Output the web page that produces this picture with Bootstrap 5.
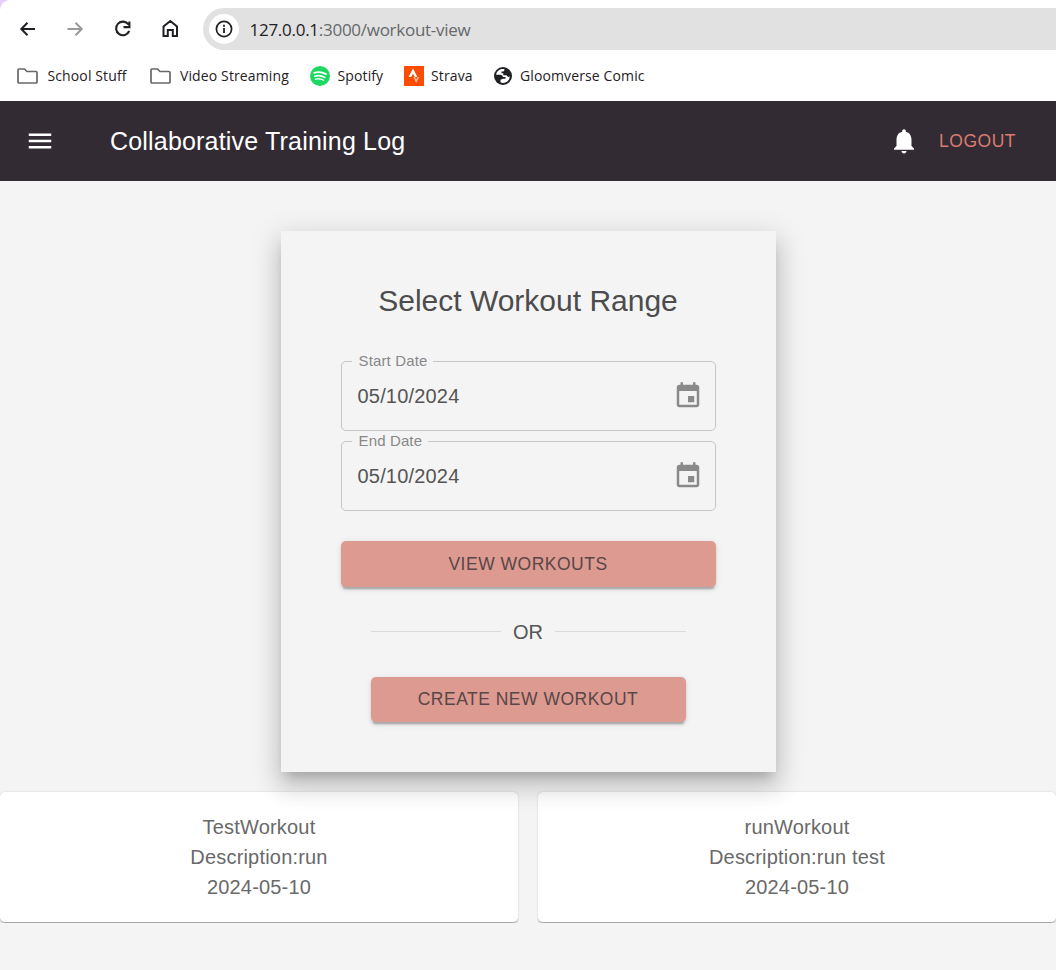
<!DOCTYPE html>
<html lang="en">
<head>
<meta charset="utf-8">
<meta name="viewport" content="width=device-width, initial-scale=1">
<title>Collaborative Training Log</title>
<link href="https://cdn.jsdelivr.net/npm/bootstrap@5.3.0/dist/css/bootstrap.min.css" rel="stylesheet">
<style>
  body { background: #f4f4f4; font-family: "Liberation Sans", Arial, sans-serif; font-size: 20px; line-height: 30px; letter-spacing: .19px; color: #696969; overflow: hidden; }
  svg { display: block; flex: none; }
  .browser { height: 101px; background: #e6cffc; font-family: "Open Sans", "Noto Sans", sans-serif; color: #1f2023; }
  .browser-inner { height: 101px; background: #fff; border-top-left-radius: 10px; }
  .tools { height: 58px; padding-left: 17px; }
  .tools .nav-icon { width: 47.5px; }
  .address { height: 42px; background: #e1e1e1; border-radius: 21px 0 0 21px; padding-left: 6px; margin-left: -4px; }
  .site-info { width: 30px; height: 30px; background: #fff; margin-right: 10.5px; }
  .url { font-size: 17px; letter-spacing: -.27px; color: #66686b; padding-top: 1px; }
  .url b { font-weight: 400; color: #1f2023; }
  .bookmarks { height: 36px; padding-left: 17px; font-size: 14px; letter-spacing: .12px; }
  .bm-label { line-height: 20px; }
  .topbar { height: 80px; background: #322b33; padding: 0 40px 0 25px; color: #fff; }
  .brand-text { font-size: 25px; letter-spacing: .19px; margin-left: 55px; }
  .caps { font-size: 17.5px; letter-spacing: .5px; line-height: 30px; }
  .logout { color: #dd7a71; margin-left: 20px; }
  .range-card { width: 495px; height: 541px; margin-top: 50px; padding: 50px 60px 0; position: relative; z-index: 1; background: #f4f4f4;
    box-shadow: 0 8.75px 10px -5px rgba(0,0,0,.17), 0 15px 21.25px 2.5px rgba(0,0,0,.12), 0 6.25px 27.5px 5px rgba(0,0,0,.1); }
  .range-title { font-size: 30px; line-height: 40px; letter-spacing: 0; color: #4c4c4c; margin-bottom: 40px; }
  .date-box { height: 70px; border: 1px solid #c6c6c6; border-radius: 5px; padding: 0 12px 0 16px; position: relative; color: #555; }
  .date-box + .date-box { margin-top: 10px; }
  .date-tag { position: absolute; left: 10px; top: -11px; padding: 0 6px 0 7px; font-size: 15px; letter-spacing: .14px; line-height: 20px; background: #f4f4f4; color: #888; }
  .action { background: #dd9a91; color: #584747; border: 0; border-radius: 5px; height: 46px; padding: 0;
    box-shadow: 0 3.75px 1.25px -2.5px rgba(0,0,0,.16), 0 2.5px 2.5px 0 rgba(0,0,0,.11), 0 1.25px 6.25px 0 rgba(0,0,0,.1); }
  .action-short { height: 45px; padding-bottom: 1px; }
  .rule { height: 1px; background: #dadada; }
  .workout { height: 131px; background: #fff; border-radius: 5px; padding-top: 20px; border-bottom: 1px solid #a6a6a6;
    box-shadow: 0 .5px 2px 0 rgba(0,0,0,.18); }
</style>
</head>
<body>
<header class="browser">
  <div class="browser-inner">
    <div class="tools d-flex align-items-center">
      <div class="nav-icon"><svg width="22" height="22" viewBox="0 0 22 22" fill="none" stroke="#1f2023" stroke-width="2"><path d="M18 11H4.500M10.500 4.800L4.300 11l6.200 6.200"/></svg></div>
      <div class="nav-icon"><svg width="22" height="22" viewBox="0 0 22 22" fill="none" stroke="#999" stroke-width="2"><path d="M2.500 11H16M10.500 4.800l6.200 6.200L10.500 17.200"/></svg></div>
      <div class="nav-icon"><svg width="22" height="22" viewBox="0 0 22 22" fill="none" stroke="#1f2023" stroke-width="2.100"><path d="M16.500 6.500A6.800 6.800 0 1 0 17.200 13M17.400 3.500v5.600H11.500"/></svg></div>
      <div class="nav-icon"><svg width="22" height="22" viewBox="0 0 22 22" fill="none" stroke="#1f2023" stroke-width="2"><path d="M3.500 18V8.500L10.300 3 17 8.500V18H12.800v-6H7.800V18Z"/></svg></div>
      <div class="address flex-grow-1 d-flex align-items-center">
        <span class="site-info rounded-circle d-flex align-items-center justify-content-center"><svg width="18" height="18" viewBox="0 0 18 18"><circle cx="9" cy="9" r="7.600" fill="none" stroke="#1f2023" stroke-width="1.700"/><path d="M9 8v5M9 4.800v2" stroke="#1f2023" stroke-width="1.800"/></svg></span>
        <span class="url text-nowrap"><b>127.0.0.1</b>:3000/workout-view</span>
      </div>
    </div>
    <nav class="bookmarks d-flex align-items-center text-nowrap">
      <svg width="21" height="16" viewBox="0 0 21 16" fill="none" stroke="#66686b" stroke-width="1.700"><path d="M1 2q0-1 1-1h5.500l2.500 2.500h9q1 0 1 1V14q0 1-1 1H2q-1 0-1-1Z"/></svg>
      <span class="bm-label" style="margin-left:9.5px;width:102.500px">School Stuff</span>
      <svg width="21" height="16" viewBox="0 0 21 16" fill="none" stroke="#66686b" stroke-width="1.700"><path d="M1 2q0-1 1-1h5.500l2.500 2.500h9q1 0 1 1V14q0 1-1 1H2q-1 0-1-1Z"/></svg>
      <span class="bm-label" style="margin-left:9px;width:130px">Video Streaming</span>
      <svg width="20" height="20" viewBox="0 0 20 20"><circle cx="10" cy="10" r="10" fill="#1ed760"/><g fill="none" stroke="#fff" stroke-linecap="round"><path d="M4.200 6.800q6.300-1.800 11.800 1.300" stroke-width="1.900"/><path d="M4.800 10.200q5.300-1.500 10 1.200" stroke-width="1.600"/><path d="M5.300 13.200q4.400-1.200 8.300 1" stroke-width="1.300"/></g></svg>
      <span class="bm-label" style="margin-left:7.5px;width:66.5px">Spotify</span>
      <svg width="20" height="20" viewBox="0 0 20 20"><path fill="#fc4c02" d="M0 0h20v20H0z"/><path fill="#fff" d="M9 2.500 4.500 11h2.700L9 7.700l1.800 3.300h2.600Z"/><path fill="#ffb08c" d="M9.200 11h1.900l1.100 2.200 1.200-2.200h2L12.200 17Z"/></svg>
      <span class="bm-label" style="margin-left:7px;width:63px">Strava</span>
      <svg width="18" height="18" viewBox="0 0 18 18"><circle cx="9" cy="9" r="9" fill="#1f2023"/><path fill="#fff" d="M10.500 2.200C6 1.300 2.500 4 2.200 7.800H6.500Q8.800 8 9 10h2.500v1.800H8.800Q8 12.500 6.500 12.800V15.300Q9 16.500 12 15.200 15.500 13.500 15.800 9.500L14 10 12.500 8.300H9.300V6.300H7.500V4.600H9.300Q10.500 4 10.500 2.200Z"/></svg>
      <span class="bm-label" style="margin-left:8px">Gloomverse Comic</span>
    </nav>
  </div>
</header>

<nav class="topbar d-flex align-items-center">
  <svg width="30" height="30" viewBox="0 0 24 24" fill="#fff"><path d="M3 18h18v-2H3zm0-5h18v-2H3zm0-7v2h18V6z"/></svg>
  <span class="brand-text">Collaborative Training Log</span>
  <svg class="ms-auto" width="30" height="30" viewBox="0 0 24 24" fill="#fff"><path d="M12 22c1.100 0 2-.9 2-2h-4c0 1.100.890 2 2 2m6-6v-5c0-3.070-1.640-5.640-4.500-6.320V4c0-.830-.670-1.500-1.500-1.500s-1.500.670-1.500 1.500v.680C7.630 5.360 6 7.920 6 11v5l-2 2v1h16v-1z"/></svg>
  <span class="caps logout">LOGOUT</span>
</nav>

<main>
  <section class="range-card mx-auto">
    <h1 class="range-title text-center fw-normal text-nowrap">Select Workout Range</h1>
    <div class="date-box d-flex align-items-center justify-content-between">
      <span class="date-tag">Start Date</span><span>05/10/2024</span>
      <svg width="30" height="30" viewBox="0 0 24 24" fill="#8a8a8a"><path d="M17 12h-5v5h5zM16 1v2H8V1H6v2H5c-1.110 0-1.990.9-1.990 2L3 19c0 1.100.890 2 2 2h14c1.100 0 2-.9 2-2V5c0-1.100-.9-2-2-2h-1V1zm3 18H5V8h14z"/></svg>
    </div>
    <div class="date-box d-flex align-items-center justify-content-between">
      <span class="date-tag">End Date</span><span>05/10/2024</span>
      <svg width="30" height="30" viewBox="0 0 24 24" fill="#8a8a8a"><path d="M17 12h-5v5h5zM16 1v2H8V1H6v2H5c-1.110 0-1.990.9-1.990 2L3 19c0 1.100.890 2 2 2h14c1.100 0 2-.9 2-2V5c0-1.100-.9-2-2-2h-1V1zm3 18H5V8h14z"/></svg>
    </div>
    <button class="action caps d-block w-100" style="margin-top:30px">VIEW WORKOUTS</button>
    <div style="padding:0 30px">
      <div class="d-flex align-items-center" style="height:30px;margin:29px 0 31px">
        <span class="rule flex-grow-1"></span><span style="padding:2px 12px 0;letter-spacing:0;color:#555">OR</span><span class="rule flex-grow-1"></span>
      </div>
      <button class="action action-short caps d-block w-100">CREATE NEW WORKOUT</button>
    </div>
  </section>
  <section class="d-flex text-center" style="gap:20px;margin-top:20px">
    <article class="workout flex-fill w-50"><div>TestWorkout</div><div>Description:run</div><div>2024-05-10</div></article>
    <article class="workout flex-fill w-50"><div>runWorkout</div><div>Description:run test</div><div>2024-05-10</div></article>
  </section>
</main>
<script src="https://cdn.jsdelivr.net/npm/bootstrap@5.3.0/dist/js/bootstrap.bundle.min.js"></script>
</body>
</html>
